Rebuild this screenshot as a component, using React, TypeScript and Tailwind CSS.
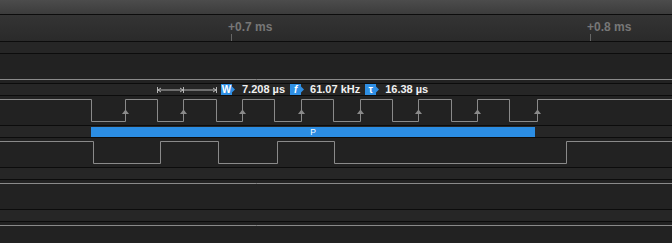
import React from 'react';

const W = 672;

function wavePath(startHigh: boolean, edges: number[]) {
  const hi = 3.5;
  const lo = 25.5;
  let y = startHigh ? hi : lo;
  let d = `M0 ${y}`;
  for (const x of edges) {
    d += ` H${x + 0.5}`;
    y = y === hi ? lo : hi;
    d += ` V${y}`;
  }
  return d + ` H${W}`;
}

const clockEdges = [91, 125, 157, 183, 216, 242, 274, 301, 333, 360, 392, 418, 451, 477, 509, 537];
const clockRises = clockEdges.filter((_, i) => i % 2 === 1);
const dataEdges = [93, 160, 218, 277, 334, 566];

function Badge({ label, italic }: { label: string; italic?: boolean }) {
  return (
    <span className="flex items-center h-[11px]">
      <span
        className={`flex items-center justify-center w-[11px] h-[11px] bg-[#2f8fe4] text-white text-[10px] font-bold leading-none ${italic ? 'italic' : ''}`}
      >
        {label}
      </span>
      <svg width="3" height="11" viewBox="0 0 3 11">
        <polygon points="0,2.5 3,5.5 0,8.5" fill="#2f8fe4" />
      </svg>
    </span>
  );
}

function Signal({ d, arrows }: { d?: string; arrows?: number[] }) {
  return (
    <div className="h-[29px] bg-[#222222]">
      {d && (
        <svg width={W} height="29" className="block">
          <path d={d} fill="none" stroke="#8a8a8a" strokeWidth="1" />
          {arrows?.map((x) => (
            <polygon key={x} points={`${x + 0.5},13.5 ${x + 4},18 ${x - 3},18`} fill="#8a8a8a" />
          ))}
        </svg>
      )}
    </div>
  );
}

function Channel({ band, children }: { band?: React.ReactNode; children: React.ReactNode }) {
  return (
    <div className="flex flex-col shrink-0">
      <div className="h-px bg-[#0c0c0c]" />
      <div className="h-[11px] bg-[#262626] relative">{band}</div>
      <div className="h-px bg-[#0c0c0c]" />
      {children}
    </div>
  );
}

export default function App() {
  return (
    <div
      className="w-[672px] h-[243px] overflow-hidden bg-[#222222]"
      style={{ fontFamily: '"Liberation Sans", Arial, sans-serif' }}
    >
      <div className="h-[14px] bg-gradient-to-b from-[#4c4c4c] to-[#3c3c3c]" />
      <div className="h-px bg-[#0c0c0c]" />
      <div className="h-[26px] bg-gradient-to-b from-[#343434] to-[#2a2a2a] relative">
        {[
          { x: 231, t: '+0.7 ms' },
          { x: 590, t: '+0.8 ms' },
        ].map((m) => (
          <div key={m.x}>
            <span
              className="absolute top-[6px] text-[12px] font-bold text-[#777777] leading-none whitespace-nowrap"
              style={{ left: m.x - 3 }}
            >
              {m.t}
            </span>
            <div className="absolute bottom-0 w-px h-[7px] bg-[#666666]" style={{ left: m.x }} />
          </div>
        ))}
      </div>

      <Channel>
        <Signal d={`M0 25.5 H${W}`} />
      </Channel>

      <Channel
        band={
          <div className="flex items-center h-[11px] pl-[157px] text-[11px] font-bold text-[#f0f0f0] leading-none whitespace-nowrap">
            <svg width="60" height="11" className="block mr-[4px]">
              <g stroke="#b5b5b5" strokeWidth="1" fill="none">
                <path d="M0.5 3 V9 M26.5 3 V9 M59.5 3 V9 M0.5 6 H59.5" />
                <path d="M4 4 L1 6 L4 8 M23 4 L26 6 L23 8 M56 4 L59 6 L56 8" />
              </g>
            </svg>
            <Badge label="W" />
            <span className="ml-[7px] mr-[5px]">7.208 µs</span>
            <Badge label="f" italic />
            <span className="ml-[6px] mr-[5px]">61.07 kHz</span>
            <Badge label="τ" />
            <span className="ml-[6px]">16.38 µs</span>
          </div>
        }
      >
        <Signal d={wavePath(true, clockEdges)} arrows={clockRises} />
      </Channel>

      <Channel
        band={
          <div className="flex h-[11px] pt-px">
            <div className="w-[91px]" />
            <div className="w-[444px] h-[10px] bg-[#2b8de3] flex items-center justify-center text-white text-[8.5px] leading-none">
              P
            </div>
          </div>
        }
      >
        <Signal d={wavePath(true, dataEdges)} />
      </Channel>

      <Channel>
        <Signal d={`M0 3.5 H${W}`} />
      </Channel>

      <Channel>
        <Signal d={`M0 3.5 H${W}`} />
      </Channel>
    </div>
  );
}
